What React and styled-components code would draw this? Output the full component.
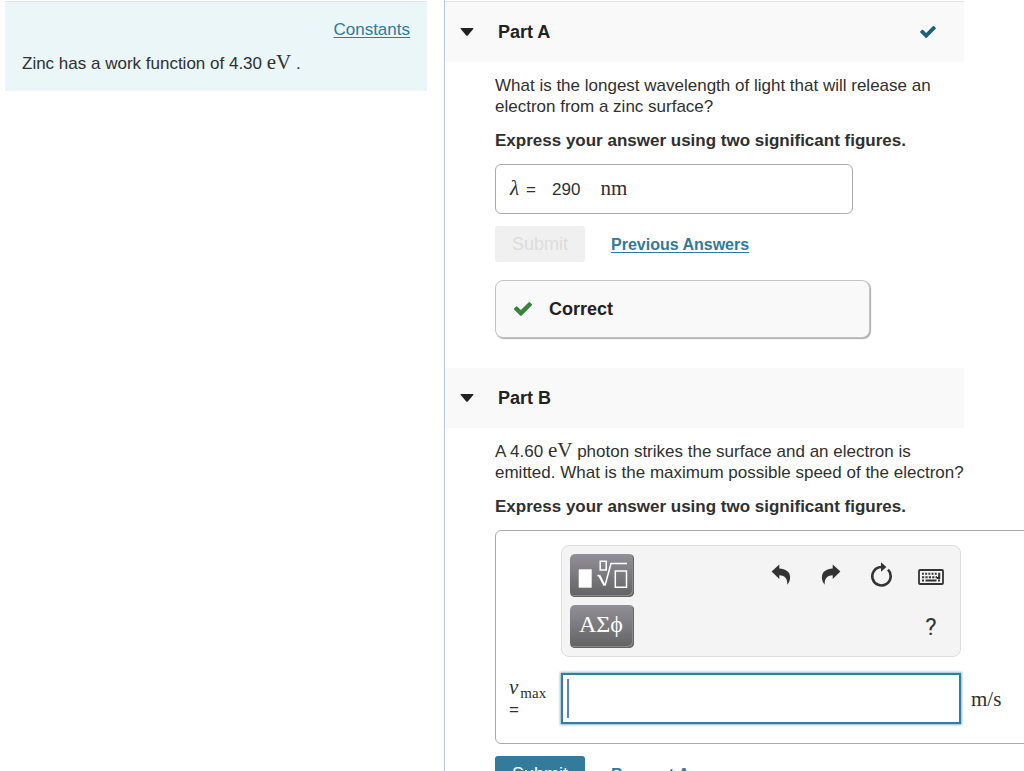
import React from 'react';
import styled, { createGlobalStyle } from 'styled-components';

const GlobalStyle = createGlobalStyle`
  * {
    box-sizing: border-box;
  }
  html {
    overflow-x: hidden;
    scrollbar-width: none;
  }
  body {
    margin: 0;
    background: #fff;
    color: #303030;
    font-family: 'Liberation Sans', Arial, sans-serif;
    font-size: 17px;
    line-height: 21px;
  }
  button, input {
    font-family: inherit;
  }
`;

const CheckIcon = ({ className }) => (
  <svg
    className={className}
    width='18'
    height='14'
    viewBox='121 334 1550 1188'
    fill='currentColor'
    aria-hidden='true'
  >
    <path d='M1671 566q0 40-28 68l-724 724-136 136q-28 28-68 28t-68-28l-136-136-362-362q-28-28-28-68t28-68l136-136q28-28 68-28t68 28l294 295 656-657q28-28 68-28t68 28l136 136q28 28 28 68z' />
  </svg>
);

const UndoIcon = ({ flip }) => (
  <svg width='20' height='24' viewBox='0 0 20 24' aria-hidden='true'>
    <path
      transform={flip ? 'translate(20 0) scale(-1 1)' : undefined}
      d='M.6 7.600 8.300.4v4.200c6.200.1 10.800 3.400 10.800 8.600 0 3-1.200 5.600-2.900 7.500.6-5.700-2.100-9.300-7.900-9.500v3.900z'
      fill='#333'
    />
  </svg>
);

const ResetIcon = () => (
  <svg width='22' height='28' viewBox='0 0 22 28' aria-hidden='true'>
    <path
      d='M18 7.700A9.200 9.200 0 1 1 11 5'
      fill='none'
      stroke='#333'
      strokeWidth='2.600'
    />
    <path d='M11 .2 16.400 5 11 9.800z' fill='#333' />
  </svg>
);

const KeyboardIcon = () => (
  <svg width='26' height='18' viewBox='0 -2 26 18' aria-hidden='true'>
    <rect
      x='1'
      y='1'
      width='24'
      height='14'
      rx='1'
      fill='none'
      stroke='#333'
      strokeWidth='1.800'
    />
    <g stroke='#333' strokeWidth='2' fill='none'>
      <path d='M4 4.800h16' strokeDasharray='1.900 1.300' />
      <path d='M4 8.200h15' strokeDasharray='2.200 1.200' />
      <path d='M4 11.600h2M7.500 11.600h11M20 11.600h2' />
      <path d='M21.200 3.700v5.200h-2.400' />
    </g>
  </svg>
);

const TemplateIcon = () => (
  <svg width='64' height='43' viewBox='0 0 64 43' aria-hidden='true'>
    <path d='M8.700 15.300h13v18.400h-13z' fill='#fff' />
    <g fill='none' stroke='#fff' strokeWidth='1.500'>
      <path d='M30.200 7.200h6v8.800h-6zM45.300 17h11.200v16.300H45.300z' />
      <path d='M27.500 22.200l1.500-1' />
      <path d='M35 31.500 41 9.500h16' />
    </g>
    <path
      d='M29.200 21.300 34.500 31.500'
      stroke='#fff'
      strokeWidth='2.200'
    />
  </svg>
);

const Caret = () => (
  <svg width='14' height='8' viewBox='0 0 14 8' aria-hidden='true'>
    <path d='M1.200 0h11.600q1.200 0 .4 1L8 7.300q-1 1-2 0L.8 1Q0 0 1.200 0z' fill='#222' />
  </svg>
);

const PartHeader = ({ title, done }) => (
  <Header>
    <Toggle type='button' aria-expanded='true' aria-label={`Toggle ${title}`}>
      <Caret />
    </Toggle>
    <h2>{title}</h2>
    {done && <CheckIcon className='done' />}
  </Header>
);

const App = () => (
  <>
    <GlobalStyle />
    <Page>
      <Sidebar>
        <Intro>
          <Link href='#constants'>Constants</Link>
          <p>
            Zinc has a work function of 4.30 <Unit>eV</Unit> .
          </p>
        </Intro>
      </Sidebar>
      <Main>
        <section>
          <PartHeader title='Part A' done />
          <Content>
            <p>
              What is the longest wavelength of light that will release an
              electron from a zinc surface?
            </p>
            <Instructions>
              Express your answer using two significant figures.
            </Instructions>
            <Answer>
              <Equals>
                <Variable>λ</Variable>=
              </Equals>
              <span>290</span>
              <Unit>nm</Unit>
            </Answer>
            <Actions>
              <Submit type='button' disabled>
                Submit
              </Submit>
              <Link href='#previous' $bold>
                Previous Answers
              </Link>
            </Actions>
            <Feedback>
              <CheckIcon />
              Correct
            </Feedback>
          </Content>
        </section>
        <section>
          <PartHeader title='Part B' />
          <Content>
            <p>
              A 4.60 <Unit>eV</Unit> photon strikes the surface and an electron
              is emitted. What is the maximum possible speed of the electron?
            </p>
            <Instructions>
              Express your answer using two significant figures.
            </Instructions>
            <Editor>
              <Toolbar>
                <PaletteButton type='button' aria-label='Templates'>
                  <TemplateIcon />
                </PaletteButton>
                <Tools>
                  <ToolButton type='button' aria-label='Undo'>
                    <UndoIcon />
                  </ToolButton>
                  <ToolButton type='button' aria-label='Redo'>
                    <UndoIcon flip />
                  </ToolButton>
                  <ToolButton type='button' aria-label='Reset'>
                    <ResetIcon />
                  </ToolButton>
                  <ToolButton type='button' aria-label='Keyboard shortcuts'>
                    <KeyboardIcon />
                  </ToolButton>
                </Tools>
                <PaletteButton type='button' $text>
                  ΑΣϕ
                </PaletteButton>
                <Tools>
                  <ToolButton type='button'>?</ToolButton>
                </Tools>
              </Toolbar>
              <FieldLabel htmlFor='speed'>
                <span>
                  <Variable>v</Variable>
                  <Subscript>max</Subscript>
                </span>
                <span>=</span>
              </FieldLabel>
              <Field>
                <Cursor />
                <input id='speed' type='text' />
              </Field>
              <Unit>m/s</Unit>
            </Editor>
            <Actions>
              <Submit type='button'>Submit</Submit>
              <Link href='#request' $bold>
                Request Answer
              </Link>
            </Actions>
          </Content>
        </section>
      </Main>
    </Page>
  </>
);

const Page = styled.div`
  display: grid;
  grid-template-columns: 444px minmax(0, 1fr);
  min-height: 100vh;
  p,
  h2 {
    margin: 0;
  }
`;

const Sidebar = styled.aside`
  padding: 1px 17px 0 5px;
`;

const Intro = styled.div`
  display: flex;
  flex-direction: column;
  gap: 13px;
  padding: 17px;
  border-top: 1px solid #dfe5e5;
  background: #eaf6f8;
  a {
    align-self: flex-end;
  }
`;

const Main = styled.main`
  padding-top: 1px;
  border-left: 1px solid #b5c7da;
`;

const Header = styled.header`
  display: flex;
  align-items: center;
  height: 60px;
  margin-right: 60px;
  padding: 0 28px 0 5px;
  background: #f9f9f9;
  section:first-child > & {
    height: 61px;
    border-top: 1px solid #e3e5e5;
  }
  h2 {
    flex: 1;
    margin-left: 14px;
    color: #222;
    font-size: 18px;
  }
  .done {
    width: 16px;
    height: 12px;
    color: #1f5f78;
  }
`;

const Toggle = styled.button`
  display: flex;
  justify-content: center;
  width: 34px;
  padding: 10px 0;
  border: 0;
  background: none;
`;

const Content = styled.div`
  padding: 13px 50px 30px;
`;

const Instructions = styled.p`
  && {
    margin: 13px 0;
  }
  font-weight: bold;
`;

const Link = styled.a`
  color: #317a9b;
  font-size: ${({ $bold }) => ($bold ? '16px' : '17px')};
  font-weight: ${({ $bold }) => ($bold ? 'bold' : 'normal')};
  text-underline-offset: 2px;
`;

const Unit = styled.span`
  font-family: 'Liberation Serif', 'Times New Roman', serif;
  font-size: 21px;
  line-height: 0;
`;

const Variable = styled(Unit)`
  font-style: italic;
`;

const Subscript = styled.sub`
  margin-left: 2px;
  font-family: 'Liberation Serif', 'Times New Roman', serif;
  font-size: 15px;
  line-height: 0;
`;

const Equals = styled.span`
  display: flex;
  align-items: baseline;
  gap: 7px;
`;

const Answer = styled.div`
  display: flex;
  align-items: baseline;
  max-width: 358px;
  height: 50px;
  padding: 14px;
  border: 1px solid #aaa;
  border-radius: 6px;
  > span + span {
    margin-left: 16px;
  }
  > ${Unit} {
    margin-left: 20px;
  }
`;

const Actions = styled.div`
  display: flex;
  align-items: center;
  gap: 26px;
  margin-top: 12px;
`;

const Submit = styled.button`
  width: 90px;
  height: 36px;
  border: 0;
  border-radius: 3px;
  background: #347a9b;
  color: #fff;
  font-size: 18px;
  &:disabled {
    background: #f0f0f0;
    color: #dcdcdc;
  }
`;

const Feedback = styled.div`
  display: flex;
  align-items: center;
  gap: 17px;
  max-width: 375px;
  height: 58px;
  margin-top: 18px;
  padding: 0 18px;
  border: 1px solid #c4c4c4;
  border-radius: 8px;
  background: #f9f9f9;
  box-shadow: 1px 1px 1px #aaa;
  color: #222;
  font-size: 18px;
  font-weight: bold;
  svg {
    color: #38833f;
  }
`;

const Editor = styled.div`
  display: grid;
  grid-template-columns: 52px 400px auto;
  row-gap: 16px;
  align-items: center;
  margin-right: -70px;
  padding: 14px 13px 19px;
  border: 1px solid #aaa;
  border-radius: 6px;
  > ${Unit} {
    margin-left: 10px;
  }
`;

const Toolbar = styled.div`
  grid-column: 2;
  display: grid;
  grid-template-columns: 64px 1fr;
  row-gap: 8px;
  padding: 8px 4px 8px 8px;
  border: 1px solid #ddd;
  border-radius: 8px;
  background: #f4f4f4;
  & + * {
    grid-column: 1;
  }
`;

const PaletteButton = styled.button`
  display: flex;
  align-items: center;
  justify-content: center;
  height: 43px;
  padding: ${({ $text }) => ($text ? '0 2px 4px 0' : '0')};
  border: 0;
  border-radius: 5px;
  background: linear-gradient(#929097, #626262);
  box-shadow: inset -1px -1px 0 #666, inset -2px -2px 0 #8a8a8a;
  color: #fff;
  font: 24px 'Liberation Serif', 'Times New Roman', serif;
`;

const Tools = styled.div`
  display: flex;
  justify-content: flex-end;
`;

const ToolButton = styled.button`
  display: flex;
  align-items: center;
  justify-content: center;
  width: 50px;
  padding: 0;
  border: 0;
  background: none;
  color: #333;
  && {
    font-family: Roboto, sans-serif;
  }
  font-size: 24px;
`;

const FieldLabel = styled.label`
  display: flex;
  flex-direction: column;
`;

const Field = styled.div`
  display: flex;
  align-items: center;
  height: 51px;
  padding: 0 4px;
  border: 2px solid #347d9e;
  box-shadow: 0 0 2px 1px #8fbacd;
  input {
    flex: 1;
    height: 40px;
    min-width: 0;
    padding: 0;
    border: 0;
    outline: 0;
    font-size: 17px;
  }
`;

const Cursor = styled.span`
  width: 2px;
  height: 39px;
  background: #5b7de0;
`;

export default App;
